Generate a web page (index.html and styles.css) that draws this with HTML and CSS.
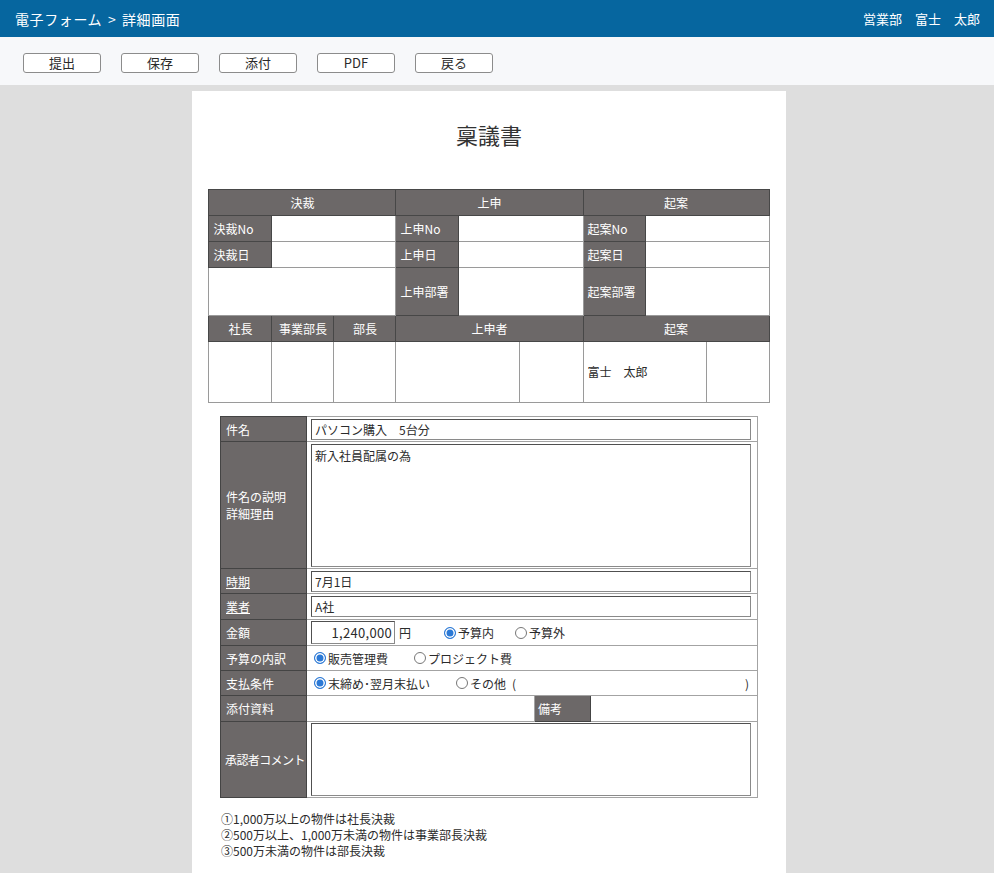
FILE: index.html
```html
<!DOCTYPE html>
<html lang="ja">
<head>
<meta charset="utf-8">
<title>稟議書</title>
<link rel="stylesheet" href="styles.css">
</head>
<body>
<header class="topbar">
  <div class="topbar-title">電子フォーム &gt; 詳細画面</div>
  <div class="topbar-user">営業部　富士　太郎</div>
</header>
<nav class="toolbar">
  <button class="btn">提出</button>
  <button class="btn">保存</button>
  <button class="btn">添付</button>
  <button class="btn">PDF</button>
  <button class="btn">戻る</button>
</nav>
<main class="workspace">
  <section class="paper">
    <h1 class="doc-title">稟議書</h1>

    <table class="approval">
      <colgroup>
        <col class="w63"><col class="w62"><col class="w62">
        <col class="w63"><col class="w61"><col class="w63">
        <col class="w62"><col class="w61"><col class="w63">
      </colgroup>
      <tr class="r26">
        <th class="center" colspan="3">決裁</th>
        <th class="center" colspan="3">上申</th>
        <th class="center" colspan="3">起案</th>
      </tr>
      <tr class="r26">
        <th>決裁No</th><td colspan="2"></td>
        <th>上申No</th><td colspan="2"></td>
        <th>起案No</th><td colspan="2"></td>
      </tr>
      <tr class="r26">
        <th>決裁日</th><td colspan="2"></td>
        <th>上申日</th><td colspan="2"></td>
        <th>起案日</th><td colspan="2"></td>
      </tr>
      <tr class="r48">
        <td colspan="3"></td>
        <th>上申部署</th><td colspan="2"></td>
        <th>起案部署</th><td colspan="2"></td>
      </tr>
      <tr class="r26">
        <th class="center">社長</th>
        <th class="center">事業部長</th>
        <th class="center">部長</th>
        <th class="center" colspan="3">上申者</th>
        <th class="center" colspan="3">起案</th>
      </tr>
      <tr class="r61">
        <td></td><td></td><td></td>
        <td colspan="2"></td><td></td>
        <td colspan="2" class="signer">富士　太郎</td><td></td>
      </tr>
    </table>

    <table class="form">
      <colgroup>
        <col class="w86"><col class="w228"><col class="w56"><col class="w167">
      </colgroup>
      <tr class="r25">
        <th>件名</th>
        <td colspan="3"><div class="box">パソコン購入　5台分</div></td>
      </tr>
      <tr class="r127">
        <th>件名の説明<br>詳細理由</th>
        <td colspan="3"><div class="box area tall">新入社員配属の為</div></td>
      </tr>
      <tr class="r25">
        <th><span class="link">時期</span></th>
        <td colspan="3"><div class="box">7月1日</div></td>
      </tr>
      <tr class="r26">
        <th><span class="link">業者</span></th>
        <td colspan="3"><div class="box">A社</div></td>
      </tr>
      <tr class="r26">
        <th>金額</th>
        <td colspan="3">
          <div class="line">
            <div class="box amount">1,240,000</div>
            <span class="yen">円</span>
            <span class="radio on gap-a">予算内</span>
            <span class="radio gap-b">予算外</span>
          </div>
        </td>
      </tr>
      <tr class="r25">
        <th>予算の内訳</th>
        <td colspan="3">
          <div class="line">
            <span class="radio on first">販売管理費</span>
            <span class="radio gap-c">プロジェクト費</span>
          </div>
        </td>
      </tr>
      <tr class="r25">
        <th>支払条件</th>
        <td colspan="3">
          <div class="line">
            <span class="radio on first">末締め･翌月末払い</span>
            <span class="radio gap-d">その他</span>
            <span class="paren"><span>(</span><span>)</span></span>
          </div>
        </td>
      </tr>
      <tr class="r26">
        <th>添付資料</th>
        <td></td>
        <th class="sub">備考</th>
        <td></td>
      </tr>
      <tr class="r76">
        <th class="narrow">承認者コメント</th>
        <td colspan="3"><div class="box area short"></div></td>
      </tr>
    </table>

    <div class="notes">
      <p>①1,000万以上の物件は社長決裁</p>
      <p>②500万以上、1,000万未満の物件は事業部長決裁</p>
      <p>③500万未満の物件は部長決裁</p>
    </div>
  </section>
</main>
</body>
</html>
```

FILE: styles.css
```css
* { box-sizing: border-box; }
html, body { margin: 0; padding: 0; }
body {
  font-family: "Noto Sans CJK JP", "Noto Sans", "Liberation Sans", sans-serif;
  font-size: 12px;
  color: #2b2b2b;
  background: #dedede;
}

/* top bar */
.topbar {
  height: 37px;
  background: #06669f;
  color: #fff;
  display: flex;
  align-items: center;
  justify-content: space-between;
  padding: 0 14px 0 15px;
}
.topbar-title { font-size: 14px; letter-spacing: 0.6px; word-spacing: 2px; }
.topbar-user { font-size: 13px; }

/* toolbar */
.toolbar {
  height: 48px;
  background: #f7f8fa;
  display: flex;
  align-items: flex-start;
  gap: 20px;
  padding: 16px 0 0 23px;
}
.btn {
  width: 78px;
  height: 20px;
  padding: 0;
  background: #fff;
  border: 1px solid #8c8c8c;
  border-radius: 3px;
  font-family: "Noto Sans CJK JP", "Noto Sans", sans-serif;
  font-size: 13px;
  line-height: 18px;
  color: #2b2b2b;
}

/* paper */
.workspace { padding: 6px 16px 0 0; }
.paper {
  width: 594px;
  margin: 0 auto;
  background: #fff;
  padding: 28px 0 30px;
}
.doc-title {
  margin: 0 0 40px;
  text-align: center;
  font-size: 22px;
  font-weight: normal;
  line-height: 30px;
  color: #333;
}

/* column widths */
.w61 { width: 61px; }
.w62 { width: 62px; }
.w63 { width: 63px; }
.w86 { width: 86px; }
.w228 { width: 228px; }
.w56 { width: 56px; }
.w167 { width: 167px; }

/* row heights */
.r25 { height: 25px; }
.r26 { height: 26px; }
.r48 { height: 48px; }
.r61 { height: 61px; }
.r76 { height: 76px; }
.r127 { height: 127px; }

/* approval table */
.approval {
  width: 560px;
  margin: 0 auto;
  border-collapse: collapse;
  table-layout: fixed;
  line-height: 16px;
}
.approval th {
  background: #6c6868;
  color: #fff;
  font-weight: normal;
  text-align: left;
  padding: 0 4px;
  border: 1px solid #474747;
  white-space: nowrap;
}
.approval th.center { text-align: center; }
.approval td {
  background: #fff;
  border: 1px solid #9a9a9a;
  padding: 0 4px;
}

/* main form */
.form {
  width: 537px;
  margin: 13px auto 0;
  border-collapse: collapse;
  table-layout: fixed;
  border: 1px solid #555;
  line-height: 17px;
}
.form th {
  background: #6c6868;
  color: #fff;
  font-weight: normal;
  text-align: left;
  padding: 0 0 0 5px;
  border: 1px solid #444;
  white-space: nowrap;
}
.form th.sub { padding-left: 3px; }
.form th.narrow { padding-left: 4px; letter-spacing: -0.6px; }
.form td {
  border: 1px solid #a3a3a3;
  padding: 0 4px;
  background: #fff;
}
.link { text-decoration: underline; }

.box {
  width: 440px;
  height: 21px;
  border: 1px solid #8a8a8a;
  border-top-color: #505050;
  border-left-color: #505050;
  padding: 0 3px;
  line-height: 19px;
  color: #2b2b2b;
  background: #fff;
}
.box.area { padding-top: 2px; line-height: 17px; }
.box.tall { height: 123px; }
.box.short { height: 73px; }
.box.amount {
  width: 84px;
  height: 23px;
  text-align: right;
  padding: 0 2px 0 0;
  line-height: 21px;
  font-size: 13px;
  letter-spacing: 0.3px;
}

.line {
  display: flex;
  align-items: center;
  white-space: nowrap;
}
.yen { margin-left: 4px; }

.radio {
  display: inline-flex;
  align-items: center;
}
.radio::before {
  content: "";
  width: 10px;
  height: 10px;
  border-radius: 50%;
  border: 1px solid #777;
  margin-right: 2px;
  background: #fff;
  flex: none;
}
.radio.on::before {
  border: 1px solid #2b79d6;
  background: #2b79d6;
  box-shadow: inset 0 0 0 1.5px #fff;
}
.radio.first { margin-left: 3px; }
.gap-a { margin-left: 33px; }
.gap-b { margin-left: 21px; }
.gap-c { margin-left: 26px; }
.gap-d { margin-left: 26px; }
.paren {
  flex: 1;
  display: flex;
  justify-content: space-between;
  margin-left: 6px;
  padding-right: 4px;
}

/* notes */
.notes {
  margin: 13px 0 0 29px;
  line-height: 16px;
  font-size: 12px;
  color: #2b2b2b;
}
.notes p { margin: 0; }
```
